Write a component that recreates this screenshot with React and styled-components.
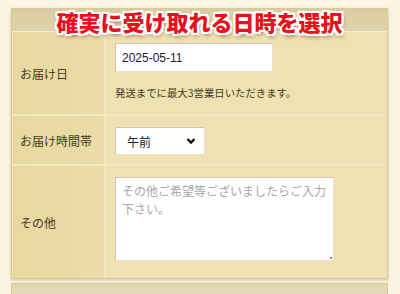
import React from "react";
import styled, { createGlobalStyle } from "styled-components";

const Global = createGlobalStyle`
  html, body { margin: 0; padding: 0; }
  body {
    background: #fcf5e1;
    font-family: "Noto Sans CJK JP", "Liberation Sans", sans-serif;
    width: 400px;
    height: 294px;
    overflow: hidden;
  }
`;

const Page = styled.div`
  padding: 8px 12px 0 11px;
  display: flex;
  flex-direction: column;
  gap: 4px;
`;

const Panel = styled.section`
  border: 1px solid #d9c996;
  box-shadow: 0 1px 3px rgba(120, 100, 50, 0.35);
  background: #eadca8;
`;

const Header = styled.div`
  height: 22px;
  background: linear-gradient(#d9cca2, #e0d4ad);
  border-bottom: 1px solid #f4ebc9;
  display: flex;
  justify-content: center;
  align-items: center;
  overflow: visible;
`;

const Title = styled.h2`
  margin: 0;
  font-size: 22px;
  font-weight: 900;
  line-height: 22px;
  color: #e8101a;
  text-shadow:
    -2px -2px 0 #fff, 2px -2px 0 #fff, -2px 2px 0 #fff, 2px 2px 0 #fff,
    0 -2px 0 #fff, 0 2px 0 #fff, -2px 0 0 #fff, 2px 0 0 #fff,
    1px 3px 4px rgba(90, 40, 20, 0.65);
  position: relative;
  top: 1px;
`;

const Table = styled.div`
  display: grid;
  grid-template-columns: 94px 1fr;
`;

const Label = styled.div`
  height: ${(p) => p.$h}px;
  box-sizing: border-box;
  display: flex;
  align-items: center;
  padding-left: 7px;
  font-size: 12px;
  color: #463a22;
  background: linear-gradient(90deg, #e8d8a0, #ebdca8);
  border-right: 2px solid #f3e8c2;
  border-bottom: ${(p) => (p.$last ? "none" : "2px solid #f3e8c2")};
  border-left: 1px solid #f0e4b8;
`;

const Value = styled.div`
  height: ${(p) => p.$h}px;
  box-sizing: border-box;
  padding: 11px 0 0 9px;
  display: flex;
  flex-direction: column;
  align-items: flex-start;
  background: #eee1b2;
  border-bottom: ${(p) => (p.$last ? "none" : "2px solid #f3e8c2")};
`;

const Field = styled.div`
  background: #fff;
  border: 1px solid #cfc7b0;
  border-bottom-color: #e8e3d3;
  border-right-color: #e8e3d3;
  box-sizing: border-box;
  font-family: "Liberation Sans", "Noto Sans CJK JP", sans-serif;
  font-size: 12px;
  color: #222;
  display: flex;
  align-items: center;
`;

const DateInput = styled(Field)`
  width: 158px;
  height: 29px;
  padding-left: 6px;
`;

const Hint = styled.p`
  margin: 14px 0 0;
  font-size: 10.4px;
  color: #463a22;
  line-height: 14px;
`;

const Select = styled(Field)`
  width: 90px;
  height: 28px;
  padding: 0 8px 0 11px;
  justify-content: space-between;
  font-family: "Noto Sans CJK JP", sans-serif;
`;

const TextArea = styled.div`
  width: 219px;
  height: 84px;
  box-sizing: border-box;
  background: #fff;
  border: 1px solid #cfc7b0;
  border-bottom-color: #e8e3d3;
  border-right-color: #e8e3d3;
  padding: 4px 6px;
  font-size: 12px;
  line-height: 18px;
  color: #a6a6a6;
  position: relative;
`;

const Grip = styled.span`
  position: absolute;
  right: 1px;
  bottom: 1px;
  width: 2px;
  height: 2px;
  background: #888;
`;

const NextHeader = styled.div`
  height: 20px;
  border: 1px solid #d9c996;
  border-bottom: none;
  background: linear-gradient(#e0d5b0, #e6dcba);
`;

const Chevron = () => (
  <svg width="10" height="8" viewBox="0 0 10 8">
    <path d="M1.5 2 L5 5.5 L8.5 2" stroke="#111" strokeWidth="2.4" fill="none" />
  </svg>
);

export default function App() {
  return (
    <>
      <Global />
      <Page>
        <Panel>
          <Header>
            <Title>確実に受け取れる日時を選択</Title>
          </Header>
          <Table>
            <Label $h={84}>お届け日</Label>
            <Value $h={84}>
              <DateInput>2025-05-11</DateInput>
              <Hint>発送までに最大3営業日いただきます。</Hint>
            </Value>
            <Label $h={50}>お届け時間帯</Label>
            <Value $h={50}>
              <Select>
                <span>午前</span>
                <Chevron />
              </Select>
            </Value>
            <Label $h={112} $last>その他</Label>
            <Value $h={112} $last>
              <TextArea>
                その他ご希望等ございましたらご入力下さい。
                <Grip />
              </TextArea>
            </Value>
          </Table>
        </Panel>
        <NextHeader />
      </Page>
    </>
  );
}
